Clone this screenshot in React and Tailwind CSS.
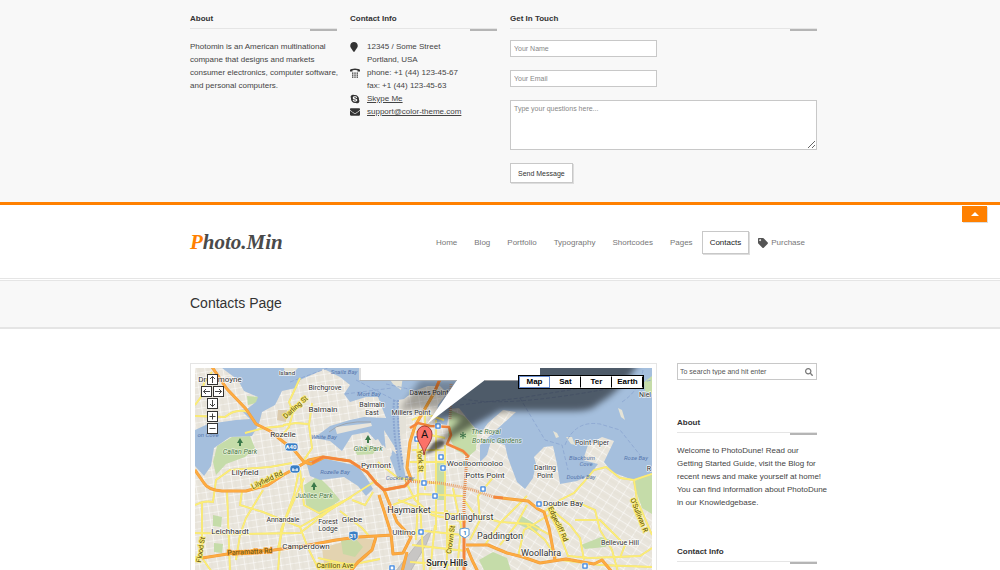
import { FaMapMarker, FaSkype, FaEnvelope, FaTag, FaSearch } from 'react-icons/fa';

const navItems = ['Home', 'Blog', 'Portfolio', 'Typography', 'Shortcodes', 'Pages', 'Contacts'];

const mapTypes = ['Map', 'Sat', 'Ter', 'Earth'];

// x, y, size, label
const suburbs = [
  [220, 382, 8, 'Drummoyne'],
  [287, 375, 6, 'Island'],
  [325, 390, 7, 'Birchgrove'],
  [323, 412, 8, 'Balmain'],
  [372, 407, 7, 'Balmain'],
  [372, 415, 7, 'East'],
  [283, 437, 8, 'Rozelle'],
  [411, 415, 7, 'Millers Point'],
  [429, 395, 7, 'Dawes Point'],
  [376, 468, 8, 'Pyrmont'],
  [245, 475, 8, 'Lilyfield'],
  [475, 466, 8, 'Woolloomooloo'],
  [485, 478, 8, 'Potts Point'],
  [592, 445, 7, 'Point Piper'],
  [545, 470, 7, 'Darling'],
  [545, 478, 7, 'Point'],
  [563, 506, 8, 'Double Bay'],
  [409, 513, 9, 'Haymarket'],
  [469, 520, 9, 'Darlinghurst'],
  [352, 522, 8, 'Glebe'],
  [283, 522, 7, 'Annandale'],
  [328, 524, 7, 'Forest'],
  [328, 531, 7, 'Lodge'],
  [230, 534, 8, 'Leichhardt'],
  [404, 535, 8, 'Ultimo'],
  [500, 539, 9, 'Paddington'],
  [306, 549, 8, 'Camperdown'],
  [541, 556, 9, 'Woollahra'],
  [620, 545, 7, 'Bellevue Hill'],
  [645, 397, 7, 'Niel'],
  [649, 471, 7, 'R'],
];

const waterNames = [
  [344, 374, 'Snails Bay'],
  [369, 396, 'Mort Bay'],
  [324, 439, 'White Bay'],
  [335, 474, 'Rozelle Bay'],
  [400, 480, 'Cockle Bay'],
  [582, 460, 'Blackburn'],
  [586, 466, 'Cove'],
  [581, 479, 'Double Bay'],
  [636, 460, 'Rose Bay'],
  [208, 437, 'on Cove'],
];

const parks = [
  [240, 454, 'Callan Park'],
  [368, 451, 'Giba Park'],
  [314, 498, 'Jubilee Park'],
  [486, 434, 'The Royal'],
  [497, 443, 'Botanic Gardens'],
];

const stations = [
  [438, 426], [441, 457], [443, 468], [424, 483], [435, 496], [539, 504],
  [421, 532], [392, 568], [585, 566], [483, 489], [417, 439],
];

const mainRoads = [
  'M210 364L227 389 246 409 256 424 270 431 281 440 294 450 304 462 311 464 325 457',
  'M195 470L204 483Q208 490 222 491L246 491 268 485 283 475 296 468 309 460 323 457 350 461 367 472 376 483 384 490 405 486 411 479 407 468 410 442 415 426 434 393 444 370',
  'M202 558L240 552 274 550 304 546 336 540 358 537 393 535',
  'M379 495L391 533 393 554 403 553 411 537 397 522 384 490',
  'M376 537L372 550 358 562 350 572',
  'M407 552L402 572',
  'M467 548L472 560 478 572',
  'M466 545L488 545 507 553 523 557 540 563 566 559 594 564 602 560 612 572',
  'M494 497L510 499 528 501 538 509 544 512 549 528 555 560',
];

const sideRoads = [
  'M195 416L225 417Q236 408 248 412',
  'M195 405L201 397 204 383 212 372',
  'M300 378L289 402 293 412 289 427 280 438',
  'M312 403L309 425 312 448 304 460',
  'M283 425L296 423 308 424',
  'M245 433L264 428 284 426',
  'M227 490L230 572',
  'M195 505Q205 500 213 502L216 480 230 470 270 467 292 463',
  'M242 491L240 505 263 512 300 527 345 501',
  'M299 470L294 495 281 530 278 572',
  'M263 490L246 518 240 535 236 560',
  'M195 533L240 534 300 533 330 510 377 480',
  'M202 502V558L212 572',
  'M300 470L304 505 319 513 352 497',
  'M352 500L365 505 373 492',
  'M340 511L362 528 370 537',
  'M300 527L308 548 320 572',
  'M278 548L285 520 304 478',
  'M318 558L350 565 380 559',
  'M378 462L389 471 398 478 415 480 440 484',
  'M412 420L426 414 444 420',
  'M416 432L445 438',
  'M412 450L445 450',
  'M410 462L448 462',
  'M425 415V490',
  'M436 420V530',
  'M445 445V520',
  'M418 440V500L416 540',
  'M405 480L415 500 432 515 466 522',
  'M398 500L430 512 462 515',
  'M393 505L420 494 463 496',
  'M420 504L424 572',
  'M435 525L430 572',
  'M447 510L447 572',
  'M453 488L461 526 457 572',
  'M412 545L466 551',
  'M410 562L464 566',
  'M415 530L463 535',
  'M464 500L475 515 500 522 530 524 550 535',
  'M470 540L480 520 478 496 495 475',
  'M485 545L500 523 527 496',
  'M500 545L516 525 527 505',
  'M518 557L524 530 549 515',
  'M527 525L545 540 556 558',
  'M544 512L560 500 574 493 583 483 594 470 606 467 620 478 634 480 652 474',
  'M552 510L570 525 580 538 584 560',
  'M572 500L595 510 600 530 612 550 618 572',
  'M549 512L558 530 568 556 590 558 640 556 652 548',
  'M575 520L600 520 625 545 620 558',
  'M634 480L637 500 652 535',
  'M561 560L600 565 652 567',
];

function Heading({ children }) {
  return (
    <h3 className="relative border-b border-[#e5e5e5] pb-[3px] text-[8px] leading-[13px] font-bold text-[#333]">
      {children}
      <span className="absolute right-0 -bottom-[3px] h-[2px] w-[27px] bg-[#b5b5b5]" />
    </h3>
  );
}

function PhoneIcon() {
  return (
    <svg viewBox="0 0 10 10" className="h-[10px] w-[10px]" fill="#333">
      <path d="M0 3.500V2Q1 .5 5 .5T10 2V3.500H7.500V2.300Q5 1.700 2.500 2.300V3.500z" />
      <path d="M2 4.500h1.400v1.200H2zM4.300 4.500h1.400v1.200H4.300zM6.600 4.500H8v1.200H6.600zM2 6.500h1.400v1.200H2zM4.300 6.500h1.400v1.200H4.300zM6.600 6.500H8v1.200H6.600zM2 8.500h1.400v1.200H2zM4.300 8.500h1.400v1.200H4.300zM6.600 8.500H8v1.200H6.600z" />
    </svg>
  );
}

function ContactRow({ icon, children }) {
  return (
    <li className="flex">
      <span className="flex h-[13px] w-[17px] items-center text-[#333]">{icon}</span>
      <span>{children}</span>
    </li>
  );
}

function MapDrawing() {
  return (
    <svg
      viewBox="195 368 457 206"
      className="block w-full"
      fontFamily="Roboto, sans-serif"
      textAnchor="middle"
      role="img"
      aria-label="Map of Sydney"
    >
      <defs>
        <pattern id="streets" width="9" height="7" patternUnits="userSpaceOnUse" patternTransform="rotate(-9)">
          <path d="M0 0H9M0 0V7" stroke="#fff" fill="none" />
          <path d="M4 0V7" stroke="#dedad0" strokeWidth=".5" fill="none" />
        </pattern>
        <pattern id="streetsEast" width="10" height="8" patternUnits="userSpaceOnUse" patternTransform="rotate(32)">
          <path d="M0 0H10M0 0V8" stroke="#fff" fill="none" />
          <path d="M0 4H10" stroke="#dedad0" strokeWidth=".5" fill="none" />
        </pattern>
        <filter id="soft" x="-20%" y="-20%" width="140%" height="140%">
          <feGaussianBlur stdDeviation="3" />
        </filter>
        <filter id="softSmall" x="-20%" y="-20%" width="140%" height="140%">
          <feGaussianBlur stdDeviation="1" />
        </filter>
      </defs>

      {/* land */}
      <path d="M190 360H660V580H190z" fill="#e9e5dc" />
      <path d="M190 360H465V580H190z" fill="url(#streets)" />
      <path d="M465 360H660V580H465z" fill="url(#streetsEast)" />

      {/* green areas */}
      <g fill="#c5dca9">
        <path d="M213 462L217 446 232 437 250 436 255 448 245 457 226 464 216 475z" />
        <path d="M240 369l12-1 1 10-8 2zM247 396l12 1-3 6-8 2z" />
        <path d="M304 485L318 476 330 488 340 500 320 515 306 505z" />
        <path d="M450 410L464 416 477 431 476 450 468 457 456 450 448 436z" />
        <path d="M437 462h8v38h-8z" />
        <path d="M633 482l12-6 7-2v40l-10-6z" />
        <path d="M581 545l20-8 14 4-10 6-20 2z" />
        <path d="M213 515l9 2-1 10-8-1zM214 543l9 1-1 9-8-1z" />
        <path d="M520 515l20 12-4 6-18-9z" />
        <path d="M479 560l14-8 14 6 5 16h-26z" />
        <path d="M355 450l12-5 10 3-4 6-16 1z" />
      </g>
      <path d="M322 548L360 537 375 540 368 556 350 572H325z" fill="#e3d3b0" />
      <path d="M341 541l14-3 8 9-8 10-12-3z" fill="#c9d8a4" />
      <path d="M278 410h9l-1 12-9-2z" fill="#dccbae" />
      <path d="M398 398l8 1v34l-6 2z" fill="#e4e1d8" />

      {/* harbour */}
      <g fill="#a5bfdd">
        <path d="M222 368L230 374 238 380 244 391 258 397 256 402 247 409 241 410 250 419 236 420 208 424 195 430V466L204 476 211 466 214 448 230 437 252 436 259 424 262 412 275 405 282 391 296 388 300 380 318 372 325 368z" />
        <path d="M322 368H652V475L633 480 612 472 604 462 614 441 602 437 588 445 583 460 598 464 590 475 577 481 560 484 557 464 553 446 544 447 534 457 536 464 533 478 525 489 517 482 508 458 505 445 491 441 487 455 480 462 480 445 496 430 516 412 503 410 488 423 480 434 466 417 459 408 450 409 447 425 435 423 438 405 447 393 440 386 428 386 414 391 404 399 398 400 400 450 406 478 398 479 390 458 394 446 384 430 386 452 368 432 352 435 342 451 330 441 314 438 330 426 350 420 364 417 386 418 378 397 366 397 350 402 344 394 350 385 340 377z" />
        <path d="M306 461L322 458 340 462 358 466 368 480 373 489 366 496 358 486 344 477 320 480 310 476z" />
      </g>
      <path d="M284 368h14l-4 4h-9zM382 368h13l8 8-2 14-8-6zM566 437l6 0 3 8-4-1zM618 408l4 2 3 10-4-3zM553 431l4 2 2 4-3 1z" fill="#e5e3d6" />
      <path d="M652 376l-8 6 1 9 7 3z" fill="#c5dca9" />
      <path d="M335 427l36-4 1 3-35 8zM388 438l10 14-2 2-11-12zM383 445l9 10-3 2-8-9zM378 439l5 8-4 3-5-9z" fill="#e9e5dc" />
      <path d="M329 432Q342 420 371 422" fill="none" stroke="#999" strokeWidth=".7" />
      <path d="M395 572L420 540 432 530 426 545 410 572z" fill="#c8c6c4" stroke="#aaa" strokeWidth=".6" />

      {/* ferry lines */}
      <g fill="none" stroke="#8aa5d0" strokeDasharray="4 2" strokeWidth=".8">
        <path d="M290 382L328 368M386 384Q420 392 470 400T652 380" />
        <path d="M394 400Q392 430 400 470M398 400Q397 430 403 466" strokeWidth="2" strokeDasharray="2 1" />
        <path d="M345 394L392 388M356 380L398 402" />
        <path d="M520 398L545 440 562 445 568 470M565 445Q575 420 600 424L620 430 640 455" />
        <path d="M460 405L520 398 600 385M622 402Q640 390 643 370" />
      </g>

      {/* roads */}
      {sideRoads.map((d) => (
        <path key={d} d={d} fill="none" stroke="#eadb80" strokeWidth="1.900" />
      ))}
      {sideRoads.map((d) => (
        <path key={d} d={d} fill="none" stroke="#fdee75" strokeWidth="1.400" />
      ))}
      {mainRoads.map((d) => (
        <path key={d} d={d} fill="none" stroke="#ee9a3a" strokeWidth="3" strokeLinejoin="round" />
      ))}
      {mainRoads.map((d) => (
        <path key={d} d={d} fill="none" stroke="#fdab41" strokeWidth="2.200" strokeLinejoin="round" />
      ))}
      <g fill="none" stroke="#f4853c" strokeWidth="2.600" strokeLinejoin="round">
        <path d="M312 463L323 457 350 461 367 472 376 483 384 490 405 486 411 479" />
        <path d="M493 497l10 1M434 393l10-23" />
        <path d="M410 428l8-5 12 3 19 1 2 8-4 9 16 7 6 6" />
      </g>
      <g fill="none" stroke="#e58a4c" strokeWidth="3" strokeDasharray="1 1">
        <path d="M405 481L440 483 470 489 494 497" stroke="#e8a06a" />
        <path d="M467 455L464 500 464 520" />
        <path d="M451 384L450 420" stroke="#cda185" />
      </g>
      <path d="M464 518V574" fill="none" stroke="#f4853c" strokeWidth="3" />

      {stations.map(([x, y]) => (
        <g key={`${x}-${y}`}>
          <rect x={x - 3} y={y - 3} width="6" height="6" rx="1" fill="#3f85dc" stroke="#fff" strokeWidth=".5" />
          <path d={`M${x - 1.4} ${y - 1.5}h2.8v3h-2.8z`} fill="#fff" />
        </g>
      ))}

      {/* route shields */}
      <g fontSize="6" fontWeight="700" fill="#fff">
        <rect x="285" y="443" width="13" height="8" rx="3" fill="#397fc6" stroke="#fff" strokeWidth=".6" />
        <text x="291" y="449">A40</text>
        <rect x="290" y="465" width="10" height="8" rx="3" fill="#397fc6" stroke="#fff" strokeWidth=".6" />
        <path d="M292 470h6M293 468v3M297 468v3" stroke="#fff" />
        <path d="M349 532l5-1 4 1v6l-4 3-5-3z" fill="#397fc6" stroke="#fff" strokeWidth=".6" />
        <text x="353" y="538">31</text>
        <path d="M460 529l5-1 4 1v6l-4 3-5-3z" fill="#fff" stroke="#5b9bd8" />
        <text x="465" y="535" fill="#397fc6">1</text>
      </g>

      {/* labels */}
      <g stroke="#fff" strokeWidth="1.600" strokeLinejoin="round" paintOrder="stroke" strokeOpacity=".8">
        <g fill="#333">
          {suburbs.map(([x, y, size, label]) => (
            <text key={`${label}-${x}-${y}`} x={x} y={y} fontSize={size}>{label}</text>
          ))}
          <text x="447" y="566" fontSize="9" fontWeight="500" fill="#222">Surry Hills</text>
        </g>
        <g fill="#4e7a46" fontSize="7" fontStyle="italic" strokeOpacity=".5">
          {parks.map(([x, y, label]) => (
            <text key={label} x={x} y={y}>{label}</text>
          ))}
        </g>
      </g>
      <g fill="#5576ad" fontSize="6" fontStyle="italic">
        {waterNames.map(([x, y, label]) => (
          <text key={`${label}-${y}`} x={x} y={y}>{label}</text>
        ))}
      </g>
      <g fill="#544a10" fontSize="7" stroke="#fdee75" strokeWidth="1.600" paintOrder="stroke">
        <text transform="translate(297 409) rotate(-42)">Darling St</text>
        <text transform="translate(268 482) rotate(-25)">Lilyfield Rd</text>
        <text transform="translate(250 554) rotate(-3)" stroke="#fba435">Parramatta Rd</text>
        <text transform="translate(203 550) rotate(-80)">Flood St</text>
        <text transform="translate(418 461) rotate(86)">York St</text>
        <text transform="translate(453 540) rotate(-82)">Crown St</text>
        <text transform="translate(556 525) rotate(65)">Edgecliff Rd</text>
        <text transform="translate(637 516) rotate(68)">O&apos;Sullivan R</text>
        <text x="335" y="568">Carillon Ave</text>
      </g>
      <g fill="#3c7a4a">
        <path d="M240 438l3 5h-2v3h-2v-3h-2zM368 435l3 5h-2v3h-2v-3h-2zM314 482l3 5h-2v3h-2v-3h-2z" />
        <path d="M463 432v7M460 434l6 3M460 437l6-3" stroke="#3c7a4a" fill="none" />
      </g>

      {/* info window with its shadow */}
      <path d="M540 360H640Q625 388 598 404Q592 411 575 411H500L430 450 462 418H446L427 425 470 375z" fill="#000" opacity=".52" filter="url(#soft)" />
      <path d="M420 380L470 380 440 408 400 410z" fill="#000" opacity=".3" filter="url(#soft)" />
      <path d="M359 360H540V380H485L427 424 457 380H359z" fill="#fff" />
      <path d="M360 368V380.500H457M485 380.500H540" fill="none" stroke="#aaa" strokeWidth=".8" />

      {/* marker */}
      <path d="M424 455L434 442Q442 438 445 443Q442 449 424 455z" fill="#000" opacity=".5" filter="url(#softSmall)" />
      <path d="M424 455C423 445 417 443 417 434A7.500 8 0 0 1 432 434C432 443 426 445 424 455z" fill="#fb7268" stroke="#8f2b25" strokeWidth=".8" />
      <text x="424.500" y="438" fontSize="11" fill="#111">A</text>
    </svg>
  );
}

function MapButton({ label, d, className = '' }) {
  return (
    <button aria-label={label} className={`flex h-[11px] w-[11px] items-center justify-center border border-[#333] bg-white ${className}`}>
      <svg viewBox="0 0 9 9" className="h-[9px] w-[9px]" fill="none" stroke="#444">
        <path d={d} />
      </svg>
    </button>
  );
}

function ContactMap() {
  return (
    <div className="relative min-w-0 flex-1 self-start border border-[#e5e5e5] p-1">
      <MapDrawing />
      <div className="absolute top-[10px] left-[10px] flex w-[23px] flex-col items-center">
        <MapButton label="Pan up" d="M4.500 8V1.500M2 4L4.500 1.500 7 4" />
        <div className="my-px flex w-full justify-between">
          <MapButton label="Pan left" d="M8 4.500H1.500M4 2L1.500 4.500 4 7" />
          <MapButton label="Pan right" d="M1 4.500H7.500M5 2L7.500 4.500 5 7" />
        </div>
        <MapButton label="Pan down" d="M4.500 1V7.500M2 5L4.500 7.500 7 5" />
        <MapButton label="Zoom in" d="M1.500 4.500H7.500M4.500 1.500V7.500" className="mt-[2px]" />
        <MapButton label="Zoom out" d="M1.500 4.500H7.500" className="mt-px" />
      </div>
      <div className="absolute top-[11px] right-[12px] grid grid-cols-4 border border-black bg-black">
        {mapTypes.map((type, i) => (
          <button
            key={type}
            className={`h-[12px] w-[31px] border bg-white text-[8px] leading-[10px] font-bold text-black ${i === 0 ? 'border-[#6b8fd0]' : 'border-y-white border-l-white border-r-black'}`}
          >
            {type}
          </button>
        ))}
      </div>
    </div>
  );
}

export default function App() {
  return (
    <div className="h-screen overflow-hidden bg-white font-['Liberation_Sans',Arial,sans-serif] text-[8px] leading-[13px] text-[#444]">
      {/* Contact panel */}
      <section className="border-b-[3px] border-[#ff8000] bg-[#f8f8f8]">
        <div className="mx-auto grid max-w-[640px] grid-cols-4 gap-[13px] pt-3 pr-[3px] pb-[19px] pl-[10px]">
          <div>
            <Heading>About</Heading>
            <p className="mt-[11px] whitespace-nowrap">
              Photomin is an American multinational<br />
              compane that designs and markets<br />
              consumer electronics, computer software,<br />
              and personal computers.
            </p>
          </div>

          <div>
            <Heading>Contact Info</Heading>
            <ul className="mt-[11px]">
              <ContactRow icon={<FaMapMarker className="h-[10px] w-[8px]" />}>
                12345 / Some Street<br />Portland, USA
              </ContactRow>
              <ContactRow icon={<PhoneIcon />}>
                phone: +1 (44) 123-45-67<br />fax: +1 (44) 123-45-63
              </ContactRow>
              <ContactRow icon={<FaSkype className="h-[10px] w-[10px]" />}>
                <a href="#skype" className="underline">Skype Me</a>
              </ContactRow>
              <ContactRow icon={<FaEnvelope className="h-[10px] w-[10px]" />}>
                <a href="mailto:support@color-theme.com" className="underline">support@color-theme.com</a>
              </ContactRow>
            </ul>
          </div>

          <div className="col-span-2">
            <Heading>Get In Touch</Heading>
            <form className="mt-[11px] flex flex-col items-start gap-[13px]" onSubmit={(e) => e.preventDefault()}>
              <input
                aria-label="Your Name"
                placeholder="Your Name"
                className="h-[17px] w-[147px] border border-[#c8c8c8] bg-white px-[3px] text-[7px] placeholder:text-[#888]"
              />
              <input
                aria-label="Your Email"
                type="email"
                placeholder="Your Email"
                className="h-[17px] w-[147px] border border-[#c8c8c8] bg-white px-[3px] text-[7px] placeholder:text-[#888]"
              />
              <textarea
                aria-label="Your question"
                placeholder="Type your questions here..."
                className="block h-[50px] w-full border border-[#c8c8c8] bg-white px-[3px] py-px text-[7px] leading-[13px] placeholder:text-[#888]"
              />
              <button className="h-5 border border-[#c8c8c8] bg-white px-[7px] text-[7px] text-[#333] shadow-[1px_1px_0_#ddd]">
                Send Message
              </button>
            </form>
          </div>
        </div>
      </section>

      {/* Header */}
      <header className="relative border-b border-[#e5e5e5]">
        <button aria-label="Close panel" className="absolute top-px right-[13px] flex h-4 w-[25px] items-center justify-center bg-[#ff8000] shadow-[1px_1px_0_#ddd]">
          <svg viewBox="0 0 8 4" className="h-1 w-2" fill="#fff"><path d="M4 0L8 4H0z" /></svg>
        </button>
        <div className="mx-auto flex h-[73px] max-w-[640px] items-center justify-between pr-[7px] pl-[10px]">
          <a href="#home" className="font-['Brush_Script_MT','Liberation_Serif',serif] text-[21px] leading-[24px] font-bold text-[#4a4a4a] italic">
            <span className="text-[#ff8000]">P</span>hoto.Min
          </a>
          <nav className="flex gap-px pt-[2px]">
            {navItems.map((item) => (
              <a
                key={item}
                href={`#${item.toLowerCase()}`}
                className={`border px-[7px] py-1 ${item === 'Contacts' ? 'border-[#c8c8c8] text-[#222] shadow-[1px_1px_0_#ddd]' : 'border-transparent text-[#777]'}`}
              >
                {item}
              </a>
            ))}
            <a href="#purchase" className="flex items-center gap-[3px] border border-transparent px-[7px] py-1 text-[#777]">
              <FaTag className="h-[10px] w-[10px] text-[#555]" />
              Purchase
            </a>
          </nav>
        </div>
      </header>

      <div className="mt-px border-t border-b-2 border-[#e5e5e5] bg-[#f8f8f8]">
        <div className="mx-auto max-w-[640px] pt-3 pb-[14px] pl-[10px]">
          <h1 className="text-[14px] leading-5 text-[#333]">Contacts Page</h1>
        </div>
      </div>

      <main className="mx-auto flex max-w-[640px] gap-5 pt-[34px] pr-[3px] pl-[10px]">
        <ContactMap />

        <aside className="w-[140px]">
          <form className="relative" onSubmit={(e) => e.preventDefault()}>
            <input
              aria-label="Search"
              placeholder="To search type and hit enter"
              className="block h-[17px] w-full border border-[#c8c8c8] bg-white pr-4 pl-[2px] text-[7px] placeholder:text-[#555]"
            />
            <button aria-label="Search" className="absolute top-[5px] right-1">
              <FaSearch className="h-2 w-2 text-[#777]" />
            </button>
          </form>

          <div className="mt-9">
            <Heading>About</Heading>
            <p className="mt-[11px] whitespace-nowrap">
              Welcome to PhotoDune! Read our<br />
              Getting Started Guide, visit the Blog for<br />
              recent news and make yourself at home!<br />
              You can find information about PhotoDune<br />
              in our Knowledgebase.
            </p>
          </div>

          <div className="mt-9">
            <Heading>Contact Info</Heading>
          </div>
        </aside>
      </main>
    </div>
  );
}
